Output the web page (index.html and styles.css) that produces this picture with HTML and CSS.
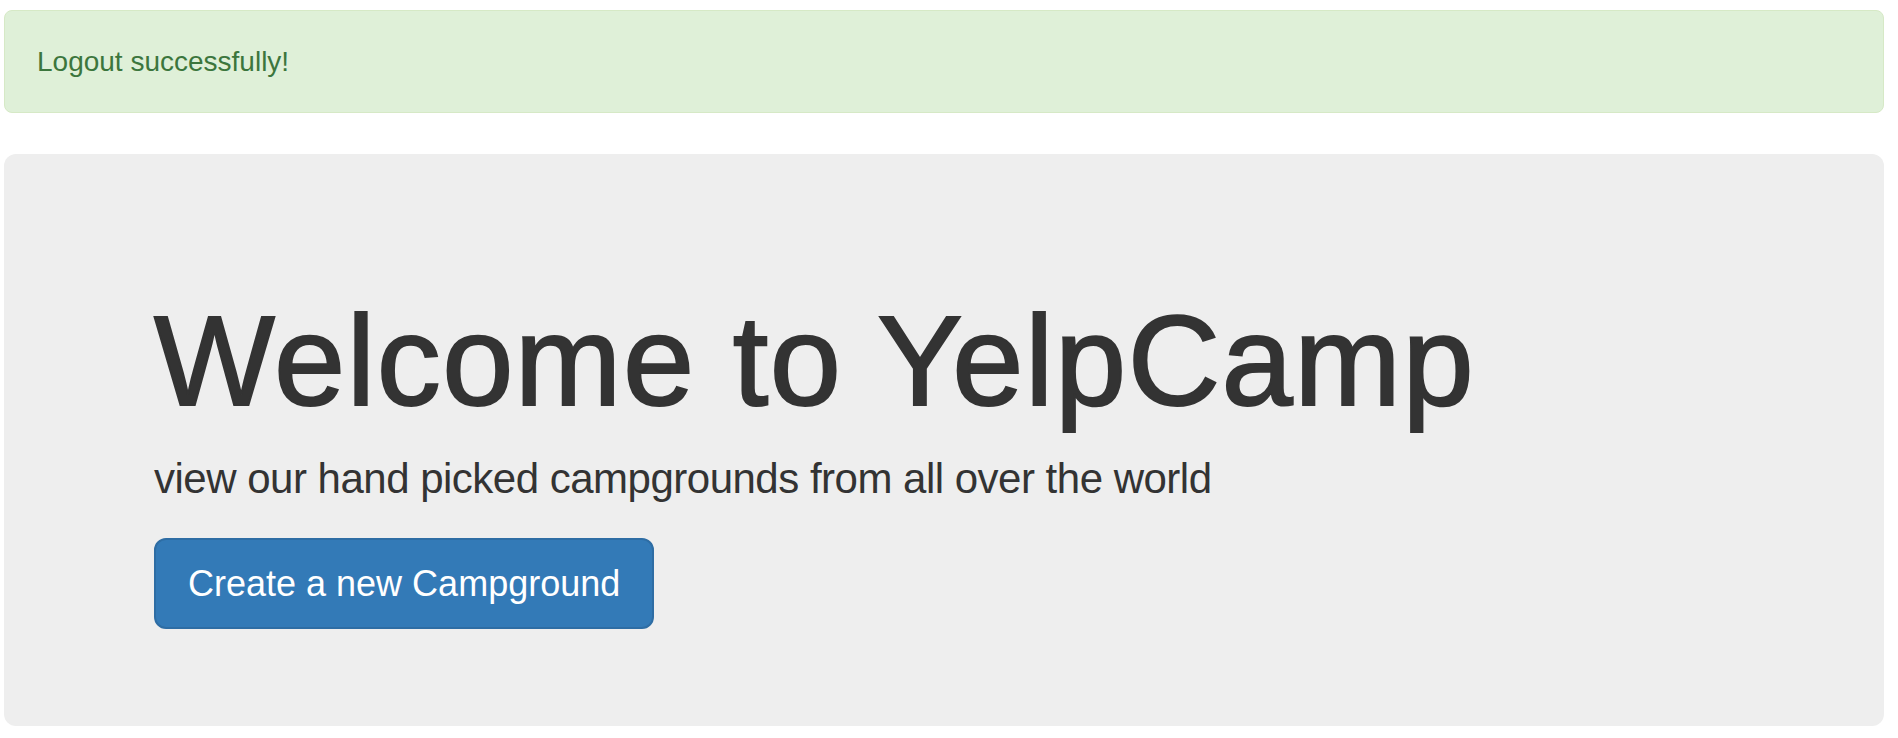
FILE: index.html
```html
<!DOCTYPE html>
<html lang="en">
<head>
<meta charset="utf-8">
<title>YelpCamp</title>
<link rel="stylesheet" href="styles.css">
</head>
<body>
<div class="page">
  <div class="alert alert-success">Logout successfully!</div>
  <header class="jumbotron">
    <h1 class="title">Welcome to YelpCamp</h1>
    <p class="lead">view our hand picked campgrounds from all over the world</p>
    <div class="actions">
      <a class="btn btn-primary" href="#">Create a new Campground</a>
    </div>
  </header>
</div>
</body>
</html>
```

FILE: styles.css
```css
* { box-sizing: border-box; }
html, body { margin: 0; background: #fff; }
body {
  font-family: "Liberation Sans", Arial, Helvetica, sans-serif;
  color: #333;
}
.page {
  padding: 10px 14px 0 4px;
}
.alert {
  padding: 31px 30px 30px 32px;
  border: 1px solid #d6e9c6;
  border-radius: 8px;
  background: #dff0d8;
  color: #3c763d;
  font-size: 28px;
  line-height: 40px;
  margin: 0 0 41px;
}
.jumbotron {
  background: #eeeeee;
  border-radius: 12px;
  padding: 96px 0 97px 150px;
}
.title {
  margin: 41px 0 17px;
  font-size: 128px;
  line-height: 1.1;
  font-weight: 400;
  letter-spacing: 1.5px;
  -webkit-text-stroke: 2px #333;
  color: #333;
}
.lead {
  margin: 0 0 29px;
  font-size: 42px;
  line-height: 60px;
  font-weight: 300;
  letter-spacing: -0.5px;
  color: #333;
}
.actions { display: flex; }
.btn {
  display: inline-block;
  padding: 20px 32px;
  border: 2px solid #2e6da4;
  border-radius: 12px;
  background: #337ab7;
  color: #fff;
  font-size: 36px;
  line-height: 47px;
  text-decoration: none;
}
```
